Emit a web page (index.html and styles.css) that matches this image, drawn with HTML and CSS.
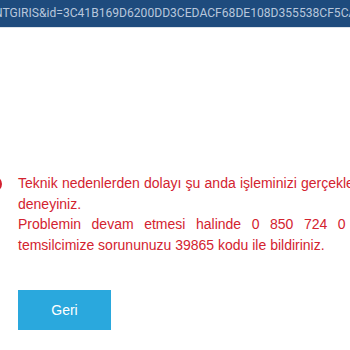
FILE: index.html
```html
<!DOCTYPE html>
<html>
<head>
    <title>Hata</title>
    <link rel="stylesheet" href="styles.css">
</head>
<body>
    <div class="addressbar">NTGIRIS&amp;id=3C41B169D6200DD3CEDACF68DE108D355538CF5CA8E1</div>
    <div class="page">
        <div class="alert">
            <svg class="alert-icon" width="16" height="16" viewBox="0 0 16 16">
                <circle cx="8" cy="8" r="7" fill="none" stroke="#d3202f" stroke-width="2"/>
                <rect x="7" y="4" width="2" height="5" fill="#d3202f"/>
                <rect x="7" y="10.5" width="2" height="2" fill="#d3202f"/>
            </svg>
            <div class="alert-body">
                <p class="message">Teknik nedenlerden dolayı şu anda işleminizi gerçekleştiremiyoruz. Lütfen kısa süre sonra deneyiniz.</p>
                <p class="message">Problemin devam etmesi halinde 0 850 724 0 724 numaralı telefondan müşteri temsilcimize sorununuzu 39865 kodu ile bildiriniz.</p>
                <button class="btn-back" type="button">Geri</button>
            </div>
        </div>
    </div>
</body>
</html>
```

FILE: styles.css
```css
html, body {
    margin: 0;
    padding: 0;
    overflow: hidden;
    background-color: #fff;
}

.addressbar {
    height: 27px;
    line-height: 27px;
    background-color: #1e4b7d;
    border-bottom: 1px solid #dde3ea;
    color: #b8c7dc;
    font-family: Roboto, sans-serif;
    font-size: 12.1px;
    white-space: nowrap;
    overflow: hidden;
    text-indent: -6px;
}

.page {
    margin-left: -14px;
    padding-top: 145px;
}

.alert {
    display: flex;
    gap: 16px;
}

.alert-icon {
    flex-shrink: 0;
    margin-top: 3px;
}

.alert-body {
    width: 559px;
    flex-shrink: 0;
}

.message {
    margin: 0;
    color: #d3232f;
    font-family: "Liberation Sans", Arial, sans-serif;
    font-size: 14px;
    line-height: 20.5px;
    text-align: justify;
}

.btn-back {
    display: block;
    margin-top: 35px;
    width: 93px;
    height: 40px;
    border: none;
    border-radius: 0;
    background-color: #2aa8dd;
    color: #fff;
    font-family: "Liberation Sans", Arial, sans-serif;
    font-size: 14px;
    cursor: pointer;
}
```
